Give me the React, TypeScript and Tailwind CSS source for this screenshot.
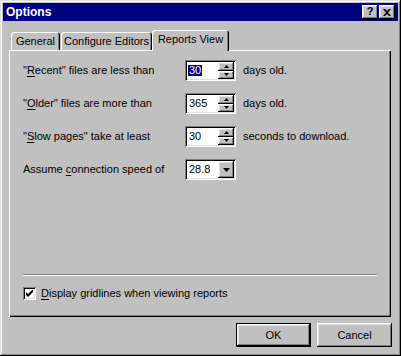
import React from 'react';

const raised =
  'shadow-[inset_-1px_-1px_0_#000,inset_1px_1px_0_#fff,inset_-2px_-2px_0_#808080,inset_2px_2px_0_#dfdfdf]';
const sunken =
  'shadow-[inset_1px_1px_0_#808080,inset_-1px_-1px_0_#fff,inset_2px_2px_0_#000,inset_-2px_-2px_0_#dfdfdf]';

function Ul({ children }: { children: React.ReactNode }) {
  return <span className="underline underline-offset-[2px] decoration-1">{children}</span>;
}

// spinner arrows
function Arrow({ up, w = 5 }: { up?: boolean; w?: number }) {
  const h = Math.ceil(w / 2);
  return (
    <svg width={w} height={h} viewBox={`0 0 ${w} ${h}`} className="block">
      <polygon
        points={up ? `0,${h} ${w},${h} ${w / 2},0` : `0,0 ${w},0 ${w / 2},${h}`}
        fill="#000"
      />
    </svg>
  );
}

function Spin({ value, selected }: { value: string; selected?: boolean }) {
  return (
    <div className={`flex h-[21px] w-[51px] bg-white p-[2px] ${sunken}`}>
      <div className="flex flex-1 items-center pl-[1px]">
        <span className={selected ? 'bg-[#000080] px-px text-white' : 'px-px'}>{value}</span>
      </div>
      <div className="flex w-[16px] flex-col">
        <div className={`flex flex-1 items-center justify-center bg-[#c0c0c0] ${raised}`}>
          <Arrow up />
        </div>
        <div className={`flex flex-1 items-center justify-center bg-[#c0c0c0] ${raised}`}>
          <Arrow />
        </div>
      </div>
    </div>
  );
}

function Combo({ value }: { value: string }) {
  return (
    <div className={`flex h-[21px] w-[51px] bg-white p-[2px] ${sunken}`}>
      <div className="flex flex-1 items-center pl-[2px]">{value}</div>
      <div className={`flex w-[16px] items-center justify-center bg-[#c0c0c0] ${raised}`}>
        <Arrow w={7} />
      </div>
    </div>
  );
}

const tabBase =
  'flex items-center justify-center rounded-t-[3px] bg-[#c0c0c0] shadow-[inset_1px_1px_0_#fff,inset_-1px_0_0_#000,inset_-2px_0_0_#808080]';

export default function App() {
  return (
    <div
      className={`flex h-[356px] w-[401px] flex-col bg-[#c0c0c0] p-[3px] text-[11px] leading-none text-black shadow-[inset_-1px_-1px_0_#000,inset_1px_1px_0_#dfdfdf,inset_-2px_-2px_0_#808080,inset_2px_2px_0_#fff]`}
      style={{ fontFamily: '"Liberation Sans", Arial, sans-serif' }}
    >
      {/* title bar */}
      <div className="flex h-[18px] items-center bg-[#000080] pl-[3px] pr-[3px]">
        <span className="flex-1 text-[12px] font-bold text-white">Options</span>
        <div className={`flex h-[14px] w-[16px] items-center justify-center bg-[#c0c0c0] pb-px text-[11px] font-bold ${raised}`}>
          ?
        </div>
        <div className={`ml-[1px] flex h-[14px] w-[16px] items-center justify-center bg-[#c0c0c0] ${raised}`}>
          <svg width="8" height="7" viewBox="0 0 8 7" className="block">
            <path d="M0 0h2l2 2 2-2h2L5 3.5 8 7H6L4 5 2 7H0l3-3.5z" fill="#000" />
          </svg>
        </div>
      </div>

      <div className="ml-[6px] mr-[7px] mt-[9px] flex flex-col">
        {/* tabs */}
        <div className="flex h-[20px] items-end">
          <div className={`ml-[2px] h-[18px] w-[49px] ${tabBase}`}>General</div>
          <div className={`ml-[1px] h-[18px] w-[91px] ${tabBase}`}>Configure Editors</div>
          <div className={`relative z-10 -mb-px h-[21px] w-[77px] pb-[2px] ${tabBase}`}>Reports View</div>
        </div>

        {/* panel */}
        <div className="flex h-[267px] flex-col px-[14px] pb-[17px] pt-[10px] shadow-[inset_1px_1px_0_#fff,inset_-1px_-1px_0_#000,inset_-2px_-2px_0_#808080]">
          <div className="grid grid-cols-[162px_51px_1fr] items-center gap-y-[12px]">
            <span>"<Ul>R</Ul>ecent" files are less than</span>
            <Spin value="30" selected />
            <span className="pl-[7px]">days old.</span>

            <span>"<Ul>O</Ul>lder" files are more than</span>
            <Spin value="365" />
            <span className="pl-[7px]">days old.</span>

            <span>"<Ul>S</Ul>low pages" take at least</span>
            <Spin value="30" />
            <span className="pl-[7px]">seconds to download.</span>

            <span>Assume <Ul>c</Ul>onnection speed of</span>
            <Combo value="28.8" />
            <span />
          </div>

          <div className="mt-auto h-[2px] border-b border-t border-b-white border-t-[#808080]" />
          <div className="mt-[11px] flex items-center gap-[5px]">
            <div className={`flex h-[13px] w-[13px] items-center justify-center bg-white ${sunken}`}>
              <svg width="7" height="7" viewBox="0 0 7 7" className="block">
                <path d="M0 2v3l2 2 5-5V-1L2 4z" fill="#000" />
              </svg>
            </div>
            <span><Ul>D</Ul>isplay gridlines when viewing reports</span>
          </div>
        </div>
      </div>

      {/* buttons */}
      <div className="mr-[6px] mt-[6px] flex justify-end gap-[6px]">
        <div className="border border-black">
          <div className={`flex h-[22px] w-[73px] items-center justify-center bg-[#c0c0c0] ${raised}`}>OK</div>
        </div>
        <div className={`flex h-[24px] w-[75px] items-center justify-center bg-[#c0c0c0] ${raised}`}>Cancel</div>
      </div>
    </div>
  );
}
